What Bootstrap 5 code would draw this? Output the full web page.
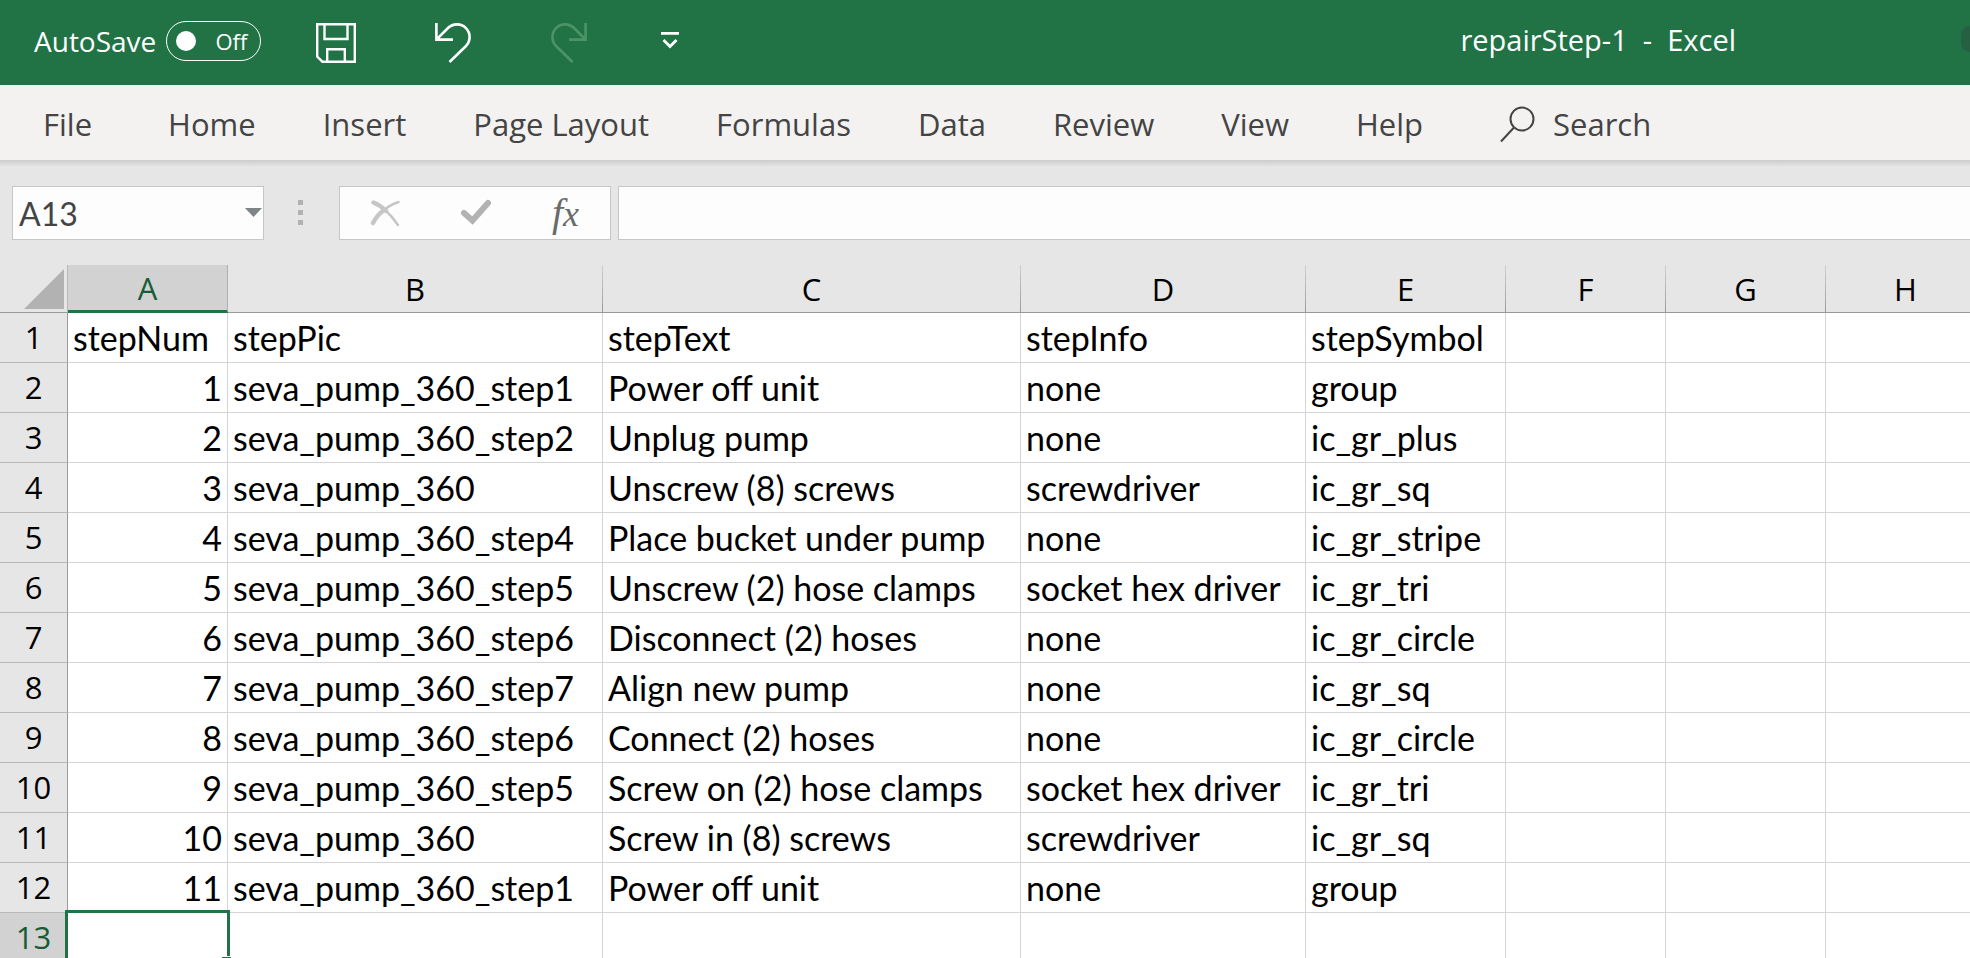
<!DOCTYPE html>
<html lang="en">
<head>
<meta charset="utf-8">
<meta name="viewport" content="width=device-width, initial-scale=1">
<title>repairStep-1 - Excel</title>
<link href="https://cdn.jsdelivr.net/npm/bootstrap@5.3.0/dist/css/bootstrap.min.css" rel="stylesheet">
<style>
  :root {
    --ui: "Open Sans", "Noto Sans", sans-serif;
    --cell: Lato, "Open Sans", sans-serif;
    --green: #217346;
    --chrome: #e6e6e6;
    --line: #d4d4d4;
    --edge: #999;
  }
  body { font-family: var(--ui); background: var(--chrome); color: #000; }
  .icon-btn { padding: 0; border: 0; background: none; color: inherit; line-height: 0; }

  .title-bar { background: var(--green); color: #fff; height: 85px; padding-left: 34px; font-size: 28px; }
  .autosave { gap: 10px; padding-bottom: 3px; }
  .switch-pill { width: 95px; height: 40px; border: 1px solid #fff; border-radius: 20px; padding: 0 13px 0 9px; font-size: 22px; }
  .switch-pill input { appearance: none; width: 20px; height: 20px; margin: 0; border-radius: 50%; background: #fff; }
  .quick-tools { gap: 79px; margin-left: 55px; padding-top: 1px; }
  .quick-tools .customize { margin-left: -6px; }
  .doc-title { white-space: pre; margin-right: 225px; padding-bottom: 5px; font-size: 29px; }
  .avatar { width: 9px; height: 26px; margin-bottom: 8px; border-radius: 13px 0 0 13px; background: #265f41; }

  .ribbon { background: #f3f2f1; height: 75px; padding: 3px 0 0 43px; font-size: 31px; }
  .ribbon a { color: #444; text-decoration: none; white-space: nowrap; }
  .ribbon nav { gap: 67px; }
  .ribbon nav a:first-child { margin-right: 9px; }
  .ribbon-search { margin-left: 77px; gap: 18px; color: #444; }
  .ribbon-search input { border: 0; background: none; padding: 0; color: #444; width: 200px; outline: 0; }
  .ribbon-search input::placeholder { color: #444; opacity: 1; }

  .formula-bar { padding: 26px 0 25px 12px; background: linear-gradient(#cdcdcd, var(--chrome) 7px); }
  .formula-bar .field { height: 54px; background: #fdfdfd; border: 1px solid #c6c6c6; }
  .name-box { width: 252px; padding: 0 1px 0 6px; }
  .name-box input { border: 0; background: none; padding: 0; min-width: 0; font: 32px var(--cell); color: #444; outline: 0; }
  .dots { margin: 0 36px 0 34px; color: #b2b2b2; }
  .fx-tools { width: 272px; padding: 0 31px 0 30px; margin-right: 7px; }
  .fx-label { font: italic 40px/40px "Liberation Serif", serif; color: #6a6a6a; }
  .fx-label span { font-size: 36px; }
  .formula-input { min-width: 0; border-right: 0 !important; outline: 0; padding: 0 8px; font: 32px var(--cell); }

  .sheet { table-layout: fixed; width: 100%; border-collapse: separate; border-spacing: 0; background: #fff; font: 34px/49px var(--cell); }
  .sheet th { font: 31px/46px var(--ui); text-align: center; background: var(--chrome); padding: 0; }
  .sheet thead th { height: 48px; border-bottom: 1px solid var(--edge); border-right: 1px solid; border-image: linear-gradient(#d0d0d0, var(--edge)) 1; }
  .sheet thead th.corner { border-image: none; border-color: var(--edge); border-right-color: #b8b8b8; text-align: right; line-height: 0; padding: 4px 3px 3px 0; vertical-align: bottom; }
  .sheet thead th.active { background: #d2d2d2; color: #185c37; border-image: none; border-right: 1px solid #b0b0b0; border-bottom: 3px solid var(--green); line-height: 44px; }
  .sheet tbody th { border-right: 1px solid var(--edge); border-bottom: 1px solid #b8b8b8; line-height: 49px; }
  .sheet tbody th.active { background: #d2d2d2; color: #185c37; }
  .sheet td { height: 50px; padding: 0 5px; border-right: 1px solid var(--line); border-bottom: 1px solid var(--line); white-space: nowrap; }
  .selection { position: absolute; inset: -3px; border: 3px solid var(--green); }
  .selection::after { content: ""; position: absolute; right: -5px; bottom: -5px; width: 11px; height: 11px; background: var(--green); border: 1px solid #fff; }
  .w-row { width: 68px; } .w-a, .w-std { width: 160px; } .w-b { width: 375px; }
  .w-c { width: 418px; } .w-d { width: 285px; } .w-e { width: 200px; }
</style>
</head>
<body class="vh-100 d-flex flex-column overflow-hidden">

<header class="title-bar d-flex align-items-center flex-shrink-0">
  <div class="autosave d-flex align-items-center">
    <label for="autosave">AutoSave</label>
    <label class="switch-pill d-flex align-items-center justify-content-between">
      <input type="checkbox" role="switch" id="autosave"><span>Off</span>
    </label>
  </div>
  <div class="quick-tools d-flex align-items-center">
    <button class="icon-btn" aria-label="Save">
      <svg width="40" height="40" viewBox="0 0 40 40" fill="none" stroke="currentColor" stroke-width="2.4"><path d="M1.2 1.2H38.8V38.8H6.5L1.2 33.5ZM8.5 1.5V16H31.5V1.5M11.2 38.5V26.2H28.8V38.5"/></svg>
    </button>
    <button class="icon-btn" aria-label="Undo">
      <svg width="37" height="40" viewBox="0 0 37 40" fill="none" stroke="currentColor" stroke-width="2.6"><path d="M1.4 0V16.6H18M1.4 16.6L12.5 5.5C16 2 19 1.4 22 1.4C29 1.4 34.6 7 34.6 14C34.6 18 33 21 30.5 23.5L14.5 39"/></svg>
    </button>
    <button class="icon-btn" aria-label="Redo" disabled>
      <svg width="37" height="40" viewBox="0 0 37 40" fill="none" stroke="#4d9368" stroke-width="2.6"><path d="M34.6 0V16.6H18M34.6 16.6L23.5 5.5C20 2 17 1.4 14 1.4C7 1.4 1.4 7 1.4 14C1.4 18 3 21 5.5 23.5L21.5 39"/></svg>
    </button>
    <button class="icon-btn customize" aria-label="Customize Quick Access Toolbar">
      <svg width="18" height="28" viewBox="0 0 18 28" fill="none" stroke="currentColor" stroke-width="2.8"><path d="M0 4.4H18M2.5 11L9 17.5L15.5 11"/></svg>
    </button>
  </div>
  <div class="doc-title ms-auto">repairStep-1  -  Excel</div>
  <div class="avatar"></div>
</header>

<div class="ribbon d-flex align-items-center flex-shrink-0">
  <nav class="d-flex" aria-label="Ribbon tabs">
    <a href="#">File</a><a href="#">Home</a><a href="#">Insert</a><a href="#">Page Layout</a><a href="#">Formulas</a><a href="#">Data</a><a href="#">Review</a><a href="#">View</a><a href="#">Help</a>
  </nav>
  <div class="ribbon-search d-flex align-items-center">
    <label for="search" aria-label="Search" class="lh-1 d-flex"><svg width="35" height="37" viewBox="0 0 35 37" fill="none" stroke="currentColor" stroke-width="2"><circle cx="22" cy="13" r="11.5"/><path d="M14 21.5L1 35.5"/></svg></label>
    <input id="search" type="text" placeholder="Search">
  </div>
</div>

<div class="formula-bar d-flex align-items-center flex-shrink-0">
  <div class="field name-box d-flex align-items-center">
    <input class="flex-grow-1" type="text" value="A13" aria-label="Name box">
    <button class="icon-btn" aria-label="Open name list"><svg width="17" height="17" viewBox="0 0 17 17"><path d="M0 3H17L8.5 12Z" fill="#7f8486"/></svg></button>
  </div>
  <svg class="dots flex-shrink-0" width="5" height="26" viewBox="0 0 5 26" fill="currentColor"><path d="M0 0H5V5H0ZM0 10H5V15H0ZM0 20H5V25H0Z"/></svg>
  <div class="field fx-tools d-flex align-items-center justify-content-between">
    <button class="icon-btn" aria-label="Cancel"><svg width="30" height="28" viewBox="0 0 30 28" fill="none" stroke="#c6c6c6" stroke-linecap="round"><path d="M3.5 3.5Q10 6 16 12M3 24Q7 16 14 11" stroke-width="4.5"/><path d="M14 10Q22 17 28 26M12 13Q19 6 28.500 3" stroke-width="2.4"/></svg></button>
    <button class="icon-btn" aria-label="Enter"><svg width="32" height="28" viewBox="0 0 32 28" fill="none" stroke="#b2b2b2" stroke-width="6"><path d="M4 14L12.5 21.5L28 4" stroke-linecap="round"/></svg></button>
    <button class="icon-btn fx-label" aria-label="Insert function">f<span>x</span></button>
  </div>
  <input class="field formula-input flex-grow-1" type="text" aria-label="Formula">
</div>

<main class="flex-grow-1 overflow-hidden">
  <table class="sheet">
    <colgroup><col class="w-row"><col class="w-a"><col class="w-b"><col class="w-c"><col class="w-d"><col class="w-e"><col class="w-std"><col class="w-std"><col class="w-std"></colgroup>
    <thead>
      <tr>
        <th class="corner"><svg width="40" height="40" viewBox="0 0 40 40"><path d="M40 0V40H0Z" fill="#b2b2b2"/></svg></th>
        <th class="active">A</th><th>B</th><th>C</th><th>D</th><th>E</th><th>F</th><th>G</th><th>H</th>
      </tr>
    </thead>
    <tbody>
      <tr><th>1</th><td>stepNum</td><td>stepPic</td><td>stepText</td><td>stepInfo</td><td>stepSymbol</td><td></td><td></td><td></td></tr>
      <tr><th>2</th><td class="text-end">1</td><td>seva_pump_360_step1</td><td>Power off unit</td><td>none</td><td>group</td><td></td><td></td><td></td></tr>
      <tr><th>3</th><td class="text-end">2</td><td>seva_pump_360_step2</td><td>Unplug pump</td><td>none</td><td>ic_gr_plus</td><td></td><td></td><td></td></tr>
      <tr><th>4</th><td class="text-end">3</td><td>seva_pump_360</td><td>Unscrew (8) screws</td><td>screwdriver</td><td>ic_gr_sq</td><td></td><td></td><td></td></tr>
      <tr><th>5</th><td class="text-end">4</td><td>seva_pump_360_step4</td><td>Place bucket under pump</td><td>none</td><td>ic_gr_stripe</td><td></td><td></td><td></td></tr>
      <tr><th>6</th><td class="text-end">5</td><td>seva_pump_360_step5</td><td>Unscrew (2) hose clamps</td><td>socket hex driver</td><td>ic_gr_tri</td><td></td><td></td><td></td></tr>
      <tr><th>7</th><td class="text-end">6</td><td>seva_pump_360_step6</td><td>Disconnect (2) hoses</td><td>none</td><td>ic_gr_circle</td><td></td><td></td><td></td></tr>
      <tr><th>8</th><td class="text-end">7</td><td>seva_pump_360_step7</td><td>Align new pump</td><td>none</td><td>ic_gr_sq</td><td></td><td></td><td></td></tr>
      <tr><th>9</th><td class="text-end">8</td><td>seva_pump_360_step6</td><td>Connect (2) hoses</td><td>none</td><td>ic_gr_circle</td><td></td><td></td><td></td></tr>
      <tr><th>10</th><td class="text-end">9</td><td>seva_pump_360_step5</td><td>Screw on (2) hose clamps</td><td>socket hex driver</td><td>ic_gr_tri</td><td></td><td></td><td></td></tr>
      <tr><th>11</th><td class="text-end">10</td><td>seva_pump_360</td><td>Screw in (8) screws</td><td>screwdriver</td><td>ic_gr_sq</td><td></td><td></td><td></td></tr>
      <tr><th>12</th><td class="text-end">11</td><td>seva_pump_360_step1</td><td>Power off unit</td><td>none</td><td>group</td><td></td><td></td><td></td></tr>
      <tr><th class="active">13</th><td class="position-relative"><div class="selection"></div></td><td></td><td></td><td></td><td></td><td></td><td></td><td></td></tr>
    </tbody>
  </table>
</main>

<script src="https://cdn.jsdelivr.net/npm/bootstrap@5.3.0/dist/js/bootstrap.bundle.min.js"></script>
</body>
</html>
